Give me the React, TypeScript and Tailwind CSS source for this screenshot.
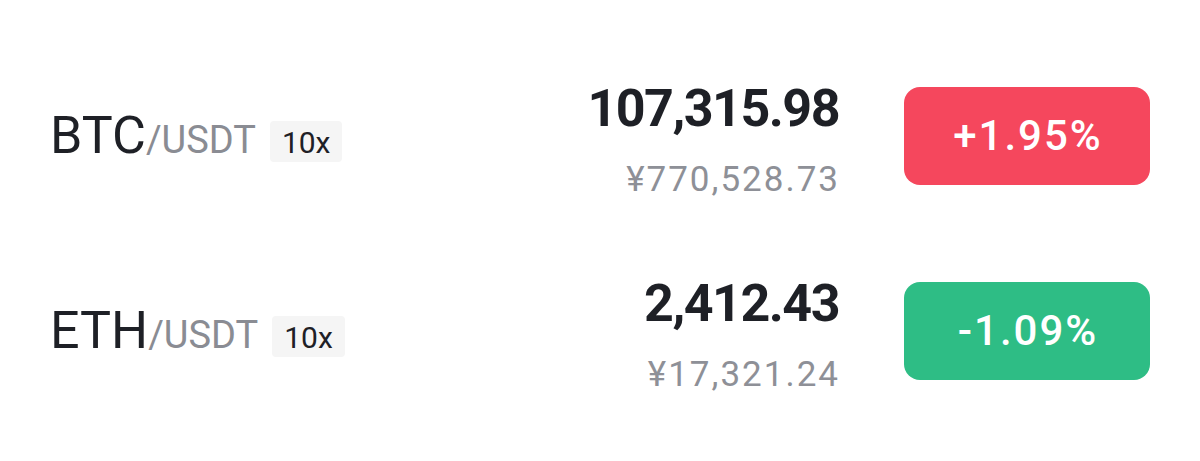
const rows = [
  { base: "BTC", price: "107,315.98", cny: "¥770,528.73", change: "+1.95%", up: true },
  { base: "ETH", price: "2,412.43", cny: "¥17,321.24", change: "-1.09%", up: false },
]

const App = () => {
  return (
    <main className="w-[1200px] h-[461px] bg-white px-[50px] pt-[38px] font-['Roboto',sans-serif] text-[#1e2026]">
      {rows.map((r) => (
        <div key={r.base} className="flex h-[195px] items-center">
          <div className="flex flex-1 items-baseline">
            <span className="text-[52px] leading-none">{r.base}</span>
            <span className="text-[38px] leading-none text-[#8a8c93]">/USDT</span>
            <span className="ml-[14px] rounded-[4px] bg-[#f5f5f5] px-3 pt-[7px] pb-[4px] text-[30px] leading-none">
              10x
            </span>
          </div>

          <div className="flex flex-col items-end pt-2">
            <span className="mr-[-1px] text-[52px] font-bold leading-none tracking-[-1.5px]">{r.price}</span>
            <span className="mt-[27px] mr-[-2px] text-[35px] leading-none tracking-[2px] text-[#8e9097]">
              {r.cny}
            </span>
          </div>

          <div
            className={`ml-[66px] flex h-[98px] w-[246px] items-center justify-center rounded-[16px] pl-[2px] text-[42px] font-medium tracking-[2px] text-white ${
              r.up ? "bg-[#f5475d]" : "bg-[#2ebd85]"
            }`}
          >
            {r.change}
          </div>
        </div>
      ))}
    </main>
  )
}

export default App
